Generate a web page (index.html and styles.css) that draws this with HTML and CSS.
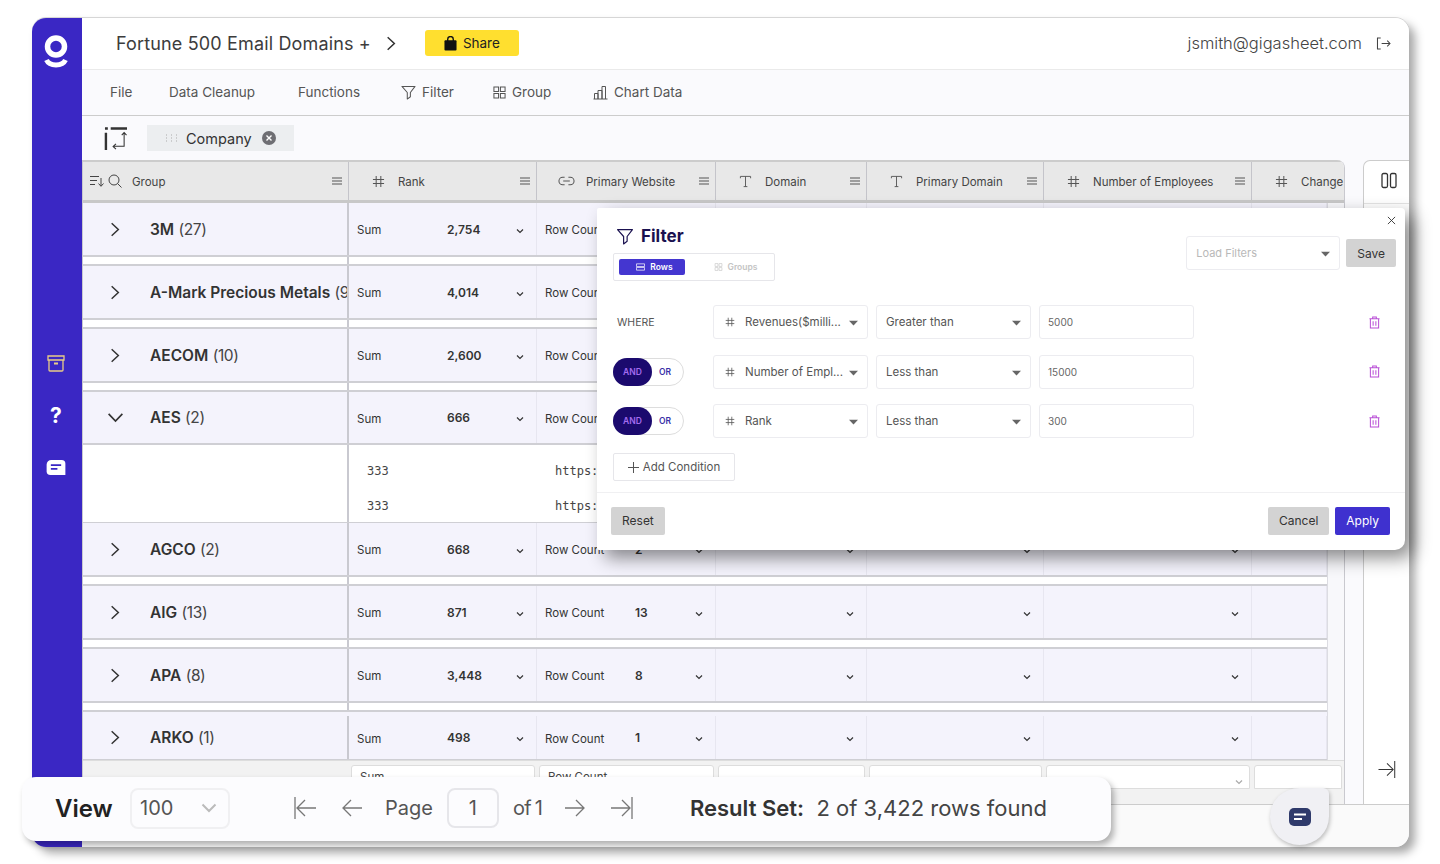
FILE: index.html
```html
<!DOCTYPE html>
<html lang="en">
<head>
<meta charset="utf-8">
<title>Gigasheet</title>
<link rel="stylesheet" href="styles.css">
</head>
<body>
<svg class="defs" width="0" height="0" aria-hidden="true">
  <symbol id="hash" viewBox="0 0 14 14"><path d="M4.5 1v12M9.5 1v12M1 4.8h12M1 9.2h12" fill="none" stroke="currentColor" stroke-width="1.1"/></symbol>
  <symbol id="menu" viewBox="0 0 10 8"><path d="M0 1h10M0 4h10M0 7h10" fill="none" stroke="currentColor" stroke-width="1.1"/></symbol>
  <symbol id="tee" viewBox="0 0 14 14"><path d="M1.5 3.5V1.5h11v2M7 1.5v11M5 12.5h4" fill="none" stroke="currentColor" stroke-width="1"/></symbol>
  <symbol id="link" viewBox="0 0 18 10"><path d="M7 1H5a4 4 0 0 0 0 8h2M11 1h2a4 4 0 0 1 0 8h-2M5.5 5h7" fill="none" stroke="currentColor" stroke-width="1.1"/></symbol>
  <symbol id="chev" viewBox="0 0 8 6"><path d="M1 1.5l3 3 3-3" fill="none" stroke="currentColor" stroke-width="1.2"/></symbol>
  <symbol id="right" viewBox="0 0 12 18"><path d="M2 1.5L10 9l-8 7.5" fill="none" stroke="currentColor" stroke-width="1.8"/></symbol>
  <symbol id="funnel" viewBox="0 0 16 16"><path d="M1 1.5h14L10 8v4.5L6.7 15V8z" fill="none" stroke="currentColor" stroke-width="1.1" stroke-linejoin="round"/></symbol>
  <symbol id="squares" viewBox="0 0 14 14"><path d="M1 1h5v5H1zM8 1h5v5H8zM1 8h5v5H1zM8 8h5v5H8z" fill="none" stroke="currentColor" stroke-width="1.1"/></symbol>
  <symbol id="caret" viewBox="0 0 10 6"><path d="M0 .5h10L5 5.8z" fill="currentColor"/></symbol>
  <symbol id="trash" viewBox="0 0 12 14"><path d="M1.5 3h9v10h-9zM.5 3h11M4 3V1h4v2M4.5 5.5v5M7.5 5.5v5" fill="none" stroke="currentColor" stroke-width="1.1"/></symbol>
  <symbol id="arrow-l" viewBox="0 0 20 18"><path d="M20 9H1M9 1L1 9l8 8" fill="none" stroke="currentColor" stroke-width="1.3"/></symbol>
  <symbol id="arrow-r" viewBox="0 0 20 18"><path d="M0 9h19M11 1l8 8-8 8" fill="none" stroke="currentColor" stroke-width="1.3"/></symbol>
  <symbol id="first" viewBox="0 0 22 22"><path d="M1 0v22M22 11H3M11 3l-8 8 8 8" fill="none" stroke="currentColor" stroke-width="1.3"/></symbol>
  <symbol id="last" viewBox="0 0 22 22"><path d="M21 0v22M0 11h19M11 3l8 8-8 8" fill="none" stroke="currentColor" stroke-width="1.3"/></symbol>
</svg>

<div class="frame">
  <aside class="sidebar">
    <svg class="logo" viewBox="0 0 24 34"><circle cx="12" cy="11.5" r="8.5" fill="none" stroke="#fff" stroke-width="5.5"/><path d="M2.5 25c3 6.500 16 6.500 19 0" fill="none" stroke="#fff" stroke-width="5"/></svg>
    <div class="side-icons">
      <svg class="side-archive" viewBox="0 0 18 17"><path d="M1 1h16v4H1zM2 5v10a1 1 0 0 0 1 1h12a1 1 0 0 0 1-1V5" fill="none" stroke="#e9cd86" stroke-width="1.300"/><rect x="7" y="7.500" width="4" height="2" fill="#e9cd86"/></svg>
      <span class="side-help">?</span>
      <svg class="side-chat" viewBox="0 0 20 16"><path d="M5 0h11a4 4 0 0 1 4 4v12H4a4 4 0 0 1-4-4V5a5 5 0 0 1 5-5z" fill="#fff"/><path d="M4.500 5.500h11M4.500 9.500h7" stroke="#3a27c4" stroke-width="2"/></svg>
    </div>
  </aside>

  <main class="main">
    <header class="topbar">
      <div class="top-left">
        <span class="doc-title">Fortune 500 Email Domains +</span>
        <svg class="doc-chev"><use href="#right"/></svg>
        <button class="share"><svg class="bag" viewBox="0 0 14 16"><path d="M4 6V3.500a3 3 0 0 1 6 0V6" fill="none" stroke="#111" stroke-width="1.500"/><rect x="0.500" y="4.500" width="13" height="11" rx="1" fill="#111"/></svg>Share</button>
      </div>
      <div class="top-right">
        <span class="email">jsmith@gigasheet.com</span>
        <svg class="logout" viewBox="0 0 16 14"><path d="M5 1H1.500v12H5M6 7h9M12 4l3 3-3 3" fill="none" stroke="#444" stroke-width="1.100"/></svg>
      </div>
    </header>

    <nav class="toolbar">
      <span class="tool t-file">File</span>
      <span class="tool t-clean">Data Cleanup</span>
      <span class="tool t-func">Functions</span>
      <span class="tool t-filter"><svg class="tool-icon"><use href="#funnel"/></svg>Filter</span>
      <span class="tool t-group"><svg class="tool-icon small"><use href="#squares"/></svg>Group</span>
      <span class="tool"><svg class="tool-icon" viewBox="0 0 15 14"><path d="M.5 13.500h14M1.500 13.500V8h3.500v5.500M5 13.500V5h4v8.500M9 13.500V1h3.500v12.500" fill="none" stroke="currentColor" stroke-width="1"/></svg>Chart Data</span>
    </nav>

    <div class="groupbar">
      <svg class="pivot" viewBox="0 0 24 24"><path d="M7 1.500h17M1 1.500h3" stroke="#333" stroke-width="2.500"/><path d="M2 6v18" stroke="#333" stroke-width="2.500"/><path d="M21 6v14H10M12.500 17.500l-3 2.800 3 2.700M18.500 8.500l2.500-2.700 2.500 2.700" fill="none" stroke="#333" stroke-width="1.100"/></svg>
      <div class="chip">
        <svg class="dots" viewBox="0 0 14 8"><path d="M1 1h1M6 1h1M11 1h1M1 4h1M6 4h1M11 4h1M1 7h1M6 7h1M11 7h1" stroke="#aaa" stroke-width="1.200"/></svg>
        <span class="chip-text">Company</span>
        <svg class="chip-x" viewBox="0 0 14 14"><circle cx="7" cy="7" r="7" fill="#6e6e73"/><path d="M4.500 4.500l5 5M9.500 4.500l-5 5" stroke="#fff" stroke-width="1.400"/></svg>
      </div>
    </div>

    <section class="workspace">
      <div class="grid">
        <div class="grid-head cols-head">
          <div class="hcell h-group">
            <svg class="sort" viewBox="0 0 14 12"><path d="M0 1.500h9M0 5.500h7M0 9.500h5M11 3v8M8.500 8.500l2.500 2.800 2.500-2.800" fill="none" stroke="#444" stroke-width="1"/></svg>
            <svg class="search" viewBox="0 0 14 14"><circle cx="6" cy="6" r="5" fill="none" stroke="#444" stroke-width="1"/><path d="M9.500 9.500L13.500 13.500" stroke="#444" stroke-width="1"/></svg>
            <span class="hlabel l-group">Group</span><svg class="hmenu"><use href="#menu"/></svg>
          </div>
          <div class="hcell h-icon-rank"><svg class="htype"><use href="#hash"/></svg><span class="hlabel">Rank</span><svg class="hmenu"><use href="#menu"/></svg></div>
          <div class="hcell h-icon-web"><svg class="htype wide"><use href="#link"/></svg><span class="hlabel">Primary Website</span><svg class="hmenu"><use href="#menu"/></svg></div>
          <div class="hcell h-icon-dom"><svg class="htype"><use href="#tee"/></svg><span class="hlabel">Domain</span><svg class="hmenu"><use href="#menu"/></svg></div>
          <div class="hcell h-icon-dom"><svg class="htype"><use href="#tee"/></svg><span class="hlabel">Primary Domain</span><svg class="hmenu"><use href="#menu"/></svg></div>
          <div class="hcell h-icon-dom"><svg class="htype"><use href="#hash"/></svg><span class="hlabel">Number of Employees</span><svg class="hmenu"><use href="#menu"/></svg></div>
          <div class="hcell h-icon-dom h-last"><svg class="htype"><use href="#hash"/></svg><span class="hlabel">Change</span></div>
        </div>

        <div class="grid-body">
          <div class="rows">
            <div class="row cols">
              <div class="cell c-name"><svg class="row-chev"><use href="#right"/></svg><b>3M</b>&nbsp;<span class="count">(27)</span></div>
              <div class="cell"><span class="agg">Sum</span><span class="val">2,754</span><svg class="dd"><use href="#chev"/></svg></div>
              <div class="cell"><span class="agg">Row Count</span><span class="val">27</span><svg class="dd"><use href="#chev"/></svg></div>
              <div class="cell"><svg class="dd"><use href="#chev"/></svg></div>
              <div class="cell"><svg class="dd"><use href="#chev"/></svg></div>
              <div class="cell"><svg class="dd"><use href="#chev"/></svg></div>
              <div class="cell"></div>
            </div>
            <div class="spacer"></div>
            <div class="row cols">
              <div class="cell c-name"><svg class="row-chev"><use href="#right"/></svg><b>A-Mark Precious Metals</b>&nbsp;<span class="count">(9)</span></div>
              <div class="cell"><span class="agg">Sum</span><span class="val">4,014</span><svg class="dd"><use href="#chev"/></svg></div>
              <div class="cell"><span class="agg">Row Count</span><span class="val">9</span><svg class="dd"><use href="#chev"/></svg></div>
              <div class="cell"><svg class="dd"><use href="#chev"/></svg></div>
              <div class="cell"><svg class="dd"><use href="#chev"/></svg></div>
              <div class="cell"><svg class="dd"><use href="#chev"/></svg></div>
              <div class="cell"></div>
            </div>
            <div class="spacer"></div>
            <div class="row cols">
              <div class="cell c-name"><svg class="row-chev"><use href="#right"/></svg><b>AECOM</b>&nbsp;<span class="count">(10)</span></div>
              <div class="cell"><span class="agg">Sum</span><span class="val">2,600</span><svg class="dd"><use href="#chev"/></svg></div>
              <div class="cell"><span class="agg">Row Count</span><span class="val">10</span><svg class="dd"><use href="#chev"/></svg></div>
              <div class="cell"><svg class="dd"><use href="#chev"/></svg></div>
              <div class="cell"><svg class="dd"><use href="#chev"/></svg></div>
              <div class="cell"><svg class="dd"><use href="#chev"/></svg></div>
              <div class="cell"></div>
            </div>
            <div class="spacer"></div>
            <div class="row row-open cols">
              <div class="cell c-name"><svg class="row-chev down" viewBox="0 0 18 12"><path d="M1.500 2L9 10l7.500-8" fill="none" stroke="currentColor" stroke-width="1.800"/></svg><b>AES</b>&nbsp;<span class="count">(2)</span></div>
              <div class="cell"><span class="agg">Sum</span><span class="val">666</span><svg class="dd"><use href="#chev"/></svg></div>
              <div class="cell"><span class="agg">Row Count</span><span class="val">2</span><svg class="dd"><use href="#chev"/></svg></div>
              <div class="cell"><svg class="dd"><use href="#chev"/></svg></div>
              <div class="cell"><svg class="dd"><use href="#chev"/></svg></div>
              <div class="cell"><svg class="dd"><use href="#chev"/></svg></div>
              <div class="cell"></div>
            </div>
            <div class="children">
              <div class="child cols">
                <div class="ccell"></div><div class="ccell mono">333</div><div class="ccell mono">https://www.aes.com</div><div class="ccell"></div><div class="ccell"></div><div class="ccell"></div><div class="ccell"></div>
              </div>
              <div class="child cols">
                <div class="ccell"></div><div class="ccell mono">333</div><div class="ccell mono">https://www.aes.com</div><div class="ccell"></div><div class="ccell"></div><div class="ccell"></div><div class="ccell"></div>
              </div>
            </div>
            <div class="row cols">
              <div class="cell c-name"><svg class="row-chev"><use href="#right"/></svg><b>AGCO</b>&nbsp;<span class="count">(2)</span></div>
              <div class="cell"><span class="agg">Sum</span><span class="val">668</span><svg class="dd"><use href="#chev"/></svg></div>
              <div class="cell"><span class="agg">Row Count</span><span class="val">2</span><svg class="dd"><use href="#chev"/></svg></div>
              <div class="cell"><svg class="dd"><use href="#chev"/></svg></div>
              <div class="cell"><svg class="dd"><use href="#chev"/></svg></div>
              <div class="cell"><svg class="dd"><use href="#chev"/></svg></div>
              <div class="cell"></div>
            </div>
            <div class="spacer"></div>
            <div class="row cols">
              <div class="cell c-name"><svg class="row-chev"><use href="#right"/></svg><b>AIG</b>&nbsp;<span class="count">(13)</span></div>
              <div class="cell"><span class="agg">Sum</span><span class="val">871</span><svg class="dd"><use href="#chev"/></svg></div>
              <div class="cell"><span class="agg">Row Count</span><span class="val">13</span><svg class="dd"><use href="#chev"/></svg></div>
              <div class="cell"><svg class="dd"><use href="#chev"/></svg></div>
              <div class="cell"><svg class="dd"><use href="#chev"/></svg></div>
              <div class="cell"><svg class="dd"><use href="#chev"/></svg></div>
              <div class="cell"></div>
            </div>
            <div class="spacer"></div>
            <div class="row cols">
              <div class="cell c-name"><svg class="row-chev"><use href="#right"/></svg><b>APA</b>&nbsp;<span class="count">(8)</span></div>
              <div class="cell"><span class="agg">Sum</span><span class="val">3,448</span><svg class="dd"><use href="#chev"/></svg></div>
              <div class="cell"><span class="agg">Row Count</span><span class="val">8</span><svg class="dd"><use href="#chev"/></svg></div>
              <div class="cell"><svg class="dd"><use href="#chev"/></svg></div>
              <div class="cell"><svg class="dd"><use href="#chev"/></svg></div>
              <div class="cell"><svg class="dd"><use href="#chev"/></svg></div>
              <div class="cell"></div>
            </div>
            <div class="spacer"></div>
            <div class="row row-last cols">
              <div class="cell c-name"><svg class="row-chev"><use href="#right"/></svg><b>ARKO</b>&nbsp;<span class="count">(1)</span></div>
              <div class="cell"><span class="agg">Sum</span><span class="val">498</span><svg class="dd"><use href="#chev"/></svg></div>
              <div class="cell"><span class="agg">Row Count</span><span class="val">1</span><svg class="dd"><use href="#chev"/></svg></div>
              <div class="cell"><svg class="dd"><use href="#chev"/></svg></div>
              <div class="cell"><svg class="dd"><use href="#chev"/></svg></div>
              <div class="cell"><svg class="dd"><use href="#chev"/></svg></div>
              <div class="cell"></div>
            </div>
          </div>
          <div class="scroll-track"></div>
        </div>

        <div class="grid-foot cols-head">
          <div class="fblank"></div>
          <div class="fcard">Sum</div>
          <div class="fcard">Row Count</div>
          <div class="fcard"></div>
          <div class="fcard"></div>
          <div class="fcard"><svg class="fdd"><use href="#chev"/></svg></div>
          <div class="fcard"></div>
        </div>
      </div>

      <aside class="sidepanel">
        <div class="side-top"><svg class="columns" viewBox="0 0 16 16"><rect x="1" y="1" width="5.500" height="14" rx="1.500" fill="none" stroke="#333" stroke-width="1.300"/><rect x="9.500" y="1" width="5.500" height="14" rx="1.500" fill="none" stroke="#333" stroke-width="1.300"/></svg></div>
        <svg class="collapse"><use href="#last"/></svg>
      </aside>
    </section>

    <footer class="footline"></footer>
  </main>

  <div class="modal">
    <svg class="modal-close" viewBox="0 0 10 10"><path d="M1 1l8 8M9 1l-8 8" stroke="#333" stroke-width="1"/></svg>
    <div class="modal-head">
      <div>
        <h2 class="modal-title"><svg class="title-icon"><use href="#funnel"/></svg>Filter</h2>
        <div class="tabs">
          <span class="tab active"><svg class="tab-icon" viewBox="0 0 10 8"><path d="M.5.500h9v3h-9zM.5 4.500h9v3h-9z" fill="none" stroke="currentColor" stroke-width=".8"/></svg>Rows</span>
          <span class="tab"><svg class="tab-icon"><use href="#squares"/></svg>Groups</span>
        </div>
      </div>
      <div class="head-right">
        <div class="select load">Load Filters<svg class="caret"><use href="#caret"/></svg></div>
        <button class="btn btn-grey btn-save">Save</button>
      </div>
    </div>

    <div class="conditions">
      <div class="cond">
        <div class="where">WHERE</div>
        <div class="select field"><svg class="fhash"><use href="#hash"/></svg><span class="ftext">Revenues($milli...</span><svg class="caret"><use href="#caret"/></svg></div>
        <div class="select op">Greater than<svg class="caret"><use href="#caret"/></svg></div>
        <div class="input">5000</div>
        <svg class="trash"><use href="#trash"/></svg>
      </div>
      <div class="cond">
        <div class="where"><div class="toggle"><span class="tg-and">AND</span><span class="tg-or">OR</span></div></div>
        <div class="select field"><svg class="fhash"><use href="#hash"/></svg><span class="ftext">Number of Empl...</span><svg class="caret"><use href="#caret"/></svg></div>
        <div class="select op">Less than<svg class="caret"><use href="#caret"/></svg></div>
        <div class="input">15000</div>
        <svg class="trash"><use href="#trash"/></svg>
      </div>
      <div class="cond">
        <div class="where"><div class="toggle"><span class="tg-and">AND</span><span class="tg-or">OR</span></div></div>
        <div class="select field"><svg class="fhash"><use href="#hash"/></svg><span class="ftext">Rank</span><svg class="caret"><use href="#caret"/></svg></div>
        <div class="select op">Less than<svg class="caret"><use href="#caret"/></svg></div>
        <div class="input">300</div>
        <svg class="trash"><use href="#trash"/></svg>
      </div>
    </div>

    <button class="add"><svg class="plus" viewBox="0 0 12 12"><path d="M6 0v12M0 6h12" stroke="#555" stroke-width="1.100"/></svg>Add Condition</button>

    <div class="modal-foot">
      <button class="btn btn-grey">Reset</button>
      <div class="foot-right">
        <button class="btn btn-grey btn-cancel">Cancel</button>
        <button class="btn btn-primary">Apply</button>
      </div>
    </div>
  </div>

  <div class="pager">
    <span class="view">View</span>
    <div class="view-select">100<svg class="view-chev" viewBox="0 0 16 10"><path d="M1.500 1.500L8 8l6.500-6.500" fill="none" stroke="#bbb" stroke-width="2"/></svg></div>
    <svg class="nav-edge first"><use href="#first"/></svg>
    <svg class="nav-arrow prev"><use href="#arrow-l"/></svg>
    <span class="page-label">Page</span>
    <div class="page-box">1</div>
    <span class="page-label page-of">of 1</span>
    <svg class="nav-arrow next"><use href="#arrow-r"/></svg>
    <svg class="nav-edge last"><use href="#last"/></svg>
    <span class="result"><b>Result Set:</b>&nbsp; 2 of 3,422 rows found</span>
  </div>

  <div class="chat">
    <svg class="chat-icon" viewBox="0 0 22 18"><rect width="22" height="18" rx="5" fill="#2f3a6b"/><path d="M5 6.500h12M5 11h8" stroke="#fff" stroke-width="2"/></svg>
  </div>
</div>
</body>
</html>
```
FILE: styles.css
```css
* { box-sizing: border-box; }
html, body { margin: 0; height: 100%; background: #fff; overflow: hidden; }
body { font-family: Inter, "Noto Sans", sans-serif; color: #333; }
button { font-family: inherit; }
svg { display: block; flex: none; }
.defs { position: absolute; }

.frame {
  position: relative;
  display: flex;
  width: 1377px;
  height: 829px;
  margin: 18px 0 0 32px;
  border-radius: 14px;
  background: #fafafd;
  box-shadow: 6px 6px 10px rgba(0,0,0,.35), 0 -1px 0 #ddd;
}

/* sidebar */
.sidebar {
  width: 50px;
  flex: none;
  display: flex;
  flex-direction: column;
  align-items: center;
  padding-right: 2px;
  background: #3a27c4;
  border-radius: 14px 0 0 14px;
}
.logo { width: 24px; height: 34px; margin-top: 17px; }
.side-icons { display: flex; flex-direction: column; align-items: center; margin-top: 286px; }
.side-archive { width: 18px; height: 17px; }
.side-help { color: #fff; font-weight: 700; font-size: 21px; line-height: 26px; margin-top: 31px; }
.side-chat { width: 20px; height: 15px; margin-top: 31px; }

/* main column */
.main { flex: 1; min-width: 0; display: flex; flex-direction: column; border-radius: 0 14px 14px 0; overflow: hidden; }
.topbar {
  height: 52px;
  flex: none;
  display: flex;
  align-items: center;
  justify-content: space-between;
  padding: 0 18px 1px 34px;
  background: #fff;
  border-bottom: 1px solid #eaeaea;
}
.top-left, .top-right { display: flex; align-items: center; }
.doc-title { font-size: 18px; color: #3c3c3c; letter-spacing: .15px; }
.doc-chev { width: 10px; height: 15px; margin-left: 15px; color: #333; }
.share {
  width: 94px; height: 26px;
  margin-left: 29px;
  display: flex; align-items: center; justify-content: center; gap: 6px;
  border: 0; border-radius: 3px;
  background: #ffdf2f;
  font-size: 13.500px; color: #222;
}
.bag { width: 13px; height: 15px; }
.email { font-size: 16.500px; color: #444; font-weight: 300; }
.logout { width: 15px; height: 13px; margin-left: 14px; }

.toolbar {
  height: 46px;
  flex: none;
  display: flex;
  align-items: center;
  padding: 0 0 1px 28px;
  border-bottom: 1px solid #ccc;
  font-size: 13.500px;
  color: #555;
}
.tool { display: flex; align-items: center; gap: 6px; }
.t-file { width: 59px; }
.t-clean { width: 129px; }
.t-func { width: 103px; }
.t-filter { width: 92px; }
.t-group { width: 100px; }
.tool-icon { width: 15px; height: 15px; }
.tool-icon.small { width: 13px; height: 13px; }

.groupbar { height: 44px; flex: none; display: flex; align-items: center; padding-left: 22px; }
.pivot { width: 23px; height: 23px; }
.chip {
  width: 147px; height: 26px;
  margin-left: 20px;
  display: flex; align-items: center;
  padding-left: 18px;
  background: #eceef0;
}
.dots { width: 14px; height: 8px; }
.chip-text { font-size: 14.500px; margin-left: 7px; width: 76px; color: #333; }
.chip-x { width: 14px; height: 14px; }

/* workspace */
.workspace { flex: 1; min-height: 0; display: flex; }
.grid {
  width: 1263px;
  flex: none;
  display: flex;
  flex-direction: column;
  border-left: 1px solid #c9c9cf;
  border-right: 1px solid #c9c9cf;
  border-radius: 0 8px 0 0;
  overflow: hidden;
}
.cols { display: grid; grid-template-columns: 266px 188px 179px 151px 177px 208px 75px; }
.cols-head { display: grid; grid-template-columns: 266px 188px 179px 151px 177px 208px 92px; }

.grid-head { height: 43px; flex: none; background: #e8e8e8; border-top: 2px solid #ccc; border-bottom: 3px solid #c8c8c8; }
.hcell { display: flex; align-items: center; border-right: 1px solid #c4c4ca; font-size: 11.500px; color: #444; padding-right: 6px; min-width: 0; overflow: hidden; }
.h-last { border-right: 0; padding-right: 0; }
.h-group { padding-left: 7px; }
.sort { width: 14px; height: 12px; }
.search { width: 14px; height: 14px; margin-left: 4px; }
.hlabel { flex: 1; white-space: nowrap; margin-top: 2px; }
.l-group { margin-left: 10px; }
.hmenu { width: 10px; height: 8px; color: #555; }
.htype { width: 13px; height: 13px; color: #555; margin-right: 13px; }
.htype.wide { width: 17px; height: 10px; margin-right: 11px; }
.h-icon-rank { padding-left: 23px; }
.h-icon-web { padding-left: 21px; }
.h-icon-dom { padding-left: 23px; }

.grid-body { flex: 1; min-height: 0; display: flex; background: #fff; }
.rows { width: 1244px; flex: none; display: flex; flex-direction: column; overflow: hidden; }
.scroll-track { flex: 1; background: #f8f8fb; border-left: 1px solid #dcdce2; }
.row { height: 54px; flex: none; background: #f4f3fc; border-bottom: 2px solid #cfcfd4; }
.row-open { height: 53px; }
.row-last { height: 49px; padding-top: 4px; }
.spacer { height: 9px; flex: none; background: #fff linear-gradient(#c9c9d0, #c9c9d0) 264px 0 / 2px 100% no-repeat; border-bottom: 2px solid #cfcfd4; }
.cell { display: flex; align-items: center; padding: 0 12px 0 8px; border-right: 1px solid #e7e6f0; font-size: 11.500px; color: #333; min-width: 0; }
.c-name { padding: 0 0 0 27px; border-right: 2px solid #c9c9d0; font-size: 15.500px; white-space: nowrap; overflow: hidden; }
.c-name b { font-weight: 600; color: #333; }
.count { color: #444; letter-spacing: -.4px; }
.row-chev { width: 10px; height: 17px; margin-right: 30px; color: #333; }
.row-chev.down { width: 17px; height: 11px; margin: 0 26px 0 -3px; }
.agg { width: 90px; flex: none; white-space: nowrap; margin-top: 2px; }
.val { flex: 1; font-weight: 600; font-size: 12px; }
.dd { width: 8px; height: 6px; margin: 3px 0 0 auto; color: #333; }

.children { height: 78px; flex: none; display: flex; flex-direction: column; padding-top: 9px; background: #fff linear-gradient(#c9c9d0, #c9c9d0) 264px 0 / 2px 100% no-repeat; border-bottom: 1px solid #cfcfd4; }
.child { height: 35px; flex: none; }
.ccell { min-width: 0; overflow: hidden; }
.mono { font-family: "DejaVu Sans Mono", monospace; font-size: 12px; color: #444; padding-left: 18px; white-space: nowrap; line-height: 35px; }

.grid-foot { height: 44px; flex: none; background: #f2f2f2; border-top: 1px solid #ddd; padding-top: 4px; }
.fblank { height: 24px; }
.fcard { height: 24px; margin: 0 2px; padding: 4px 0 0 8px; background: #fff; border: 1px solid #ddd; border-radius: 3px 3px 0 0; font-size: 11.500px; color: #444; display: flex; }
.fdd { width: 8px; height: 6px; margin: 9px 6px 0 auto; color: #aaa; }

.sidepanel { width: 46px; flex: none; margin-left: 18px; display: flex; flex-direction: column; align-items: center; background: #fff; border: 1px solid #ccc; border-width: 1px 0 0 1px; border-radius: 7px 0 0 0; }
.side-top { width: 100%; height: 43px; display: flex; align-items: center; justify-content: center; border-bottom: 1px solid #e4e4e4; padding: 0 0 4px 4px; }
.columns { width: 16px; height: 17px; }
.collapse { width: 18px; height: 17px; margin-top: 557px; color: #333; }

.footline { height: 43px; flex: none; border-top: 1px solid #ccc; background: #fafafa; }

/* modal */
.modal {
  position: absolute;
  left: 565px; top: 190px;
  width: 808px; height: 342px;
  display: flex;
  flex-direction: column;
  padding: 20px 0 0 16px;
  background: #fff;
  border-radius: 2px 4px 10px 2px;
  box-shadow: 8px 8px 18px rgba(0,0,0,.45);
  color: #555;
}
.modal-close { position: absolute; right: 9px; top: 8px; width: 9px; height: 9px; }
.modal-head { display: flex; justify-content: space-between; height: 78px; padding-right: 9px; }
.modal-title { display: flex; align-items: center; margin: 0; height: 16px; padding-left: 3px; font-size: 17px; font-weight: 700; color: #1a1150; }
.title-icon { width: 18px; height: 17px; margin-right: 7px; color: #1a1150; }
.tabs { width: 162px; height: 28px; margin-top: 9px; display: flex; align-items: center; padding: 0 5px; border: 1px solid #e6e6ea; border-radius: 2px; }
.tab { width: 66px; height: 16px; display: flex; align-items: center; justify-content: center; gap: 5px; padding-left: 5px; font-size: 8.500px; font-weight: 600; color: #c4c4c4; border-radius: 2px; }
.tab:last-child { margin-left: 15px; }
.tab.active { background: #4436d0; color: #fff; }
.tab-icon { width: 9px; height: 8px; }
.head-right { display: flex; align-items: center; gap: 6px; height: 34px; margin-top: 8px; }

.select { height: 34px; display: flex; align-items: center; padding-left: 9px; border: 1px solid #ececf0; border-radius: 3px; font-size: 11.500px; color: #555; position: relative; }
.caret { position: absolute; right: 9px; top: 14px; width: 9px; height: 6px; color: #666; }
.load { width: 154px; color: #b8b8b8; font-size: 11px; }
.btn { height: 28px; padding: 0 11px; border: 0; border-radius: 2px; font-size: 12px; color: #333; }
.btn-grey { background: #d3d3d3; }
.btn-primary { background: #3f31cf; color: #fff; }

.conditions { display: flex; flex-direction: column; gap: 15.500px; margin-top: -1px; }
.cond { display: flex; align-items: center; height: 34px; }
.where { width: 100px; padding-left: 4px; font-size: 10.500px; color: #555; }
.where .toggle { margin-left: -4px; }
.toggle { width: 71px; height: 28px; display: flex; align-items: center; border: 1px solid #ddd; border-radius: 14px; font-size: 8.500px; font-weight: 600; }
.tg-and { width: 39px; height: 28px; margin: 0 0 0 -1px; display: flex; align-items: center; justify-content: center; border-radius: 14px; background: #1b0a6e; color: #a56cf0; }
.tg-or { margin-left: 7px; color: #3a2fa8; }
.field { width: 155px; }
.fhash { width: 10px; height: 10px; margin: 0 10px 0 2px; color: #555; }
.ftext { white-space: nowrap; }
.op { width: 155px; margin-left: 8px; }
.input { width: 155px; height: 34px; margin-left: 8px; padding-left: 8px; display: flex; align-items: center; border: 1px solid #ececf0; border-radius: 3px; font-size: 10px; color: #666; }
.trash { width: 11px; height: 13px; margin-left: 175px; color: #b94fd6; }

.add { width: 122px; height: 28px; margin-top: 15px; display: flex; align-items: center; justify-content: center; gap: 4px; background: #fff; border: 1px solid #e6e6ea; border-radius: 2px; font-size: 11.500px; color: #555; padding: 0; }
.plus { width: 11px; height: 11px; }

.modal-foot { display: flex; justify-content: space-between; align-items: center; height: 58px; margin: 11px 0 0 -16px; padding: 0 15px 2px 14px; border-top: 1px solid #f0f0f2; }
.foot-right { display: flex; gap: 6px; }

/* pager */
.pager {
  position: absolute;
  left: -10px; top: 759px;
  width: 1089px; height: 64px;
  display: flex;
  align-items: center;
  padding: 0 0 2px 33px;
  background: #fcfcfe;
  border-radius: 14px;
  box-shadow: 3px 4px 6px rgba(0,0,0,.3);
  color: #555;
}
.view { width: 75px; font-size: 24px; font-weight: 600; color: #222; }
.view-select { width: 100px; height: 41px; display: flex; align-items: center; justify-content: space-between; padding: 0 11px 0 8px; border: 2px solid #f0f0f2; border-radius: 8px; font-size: 20px; color: #555; }
.view-chev { width: 16px; height: 10px; }
.nav-edge { width: 22px; height: 22px; color: #777; }
.nav-arrow { width: 20px; height: 18px; color: #777; }
.first { margin-left: 64px; }
.prev { margin-left: 26px; }
.page-label { font-size: 20px; color: #555; }
.prev + .page-label { margin-left: 23px; }
.page-of { width: 28px; white-space: nowrap; letter-spacing: -.6px; word-spacing: -1.500px; }
.page-box { width: 52px; height: 40px; margin: 0 14px; display: flex; align-items: center; justify-content: center; border: 2px solid #e6e6ea; border-radius: 8px; font-size: 20px; }
.next { margin-left: 24px; }
.last { margin-left: 26px; }
.result { margin-left: 57px; font-size: 22px; color: #444; white-space: nowrap; }
.result b { font-weight: 600; color: #333; }

.chat {
  position: absolute;
  left: 1238px; top: 770px;
  width: 59px; height: 57px;
  display: flex; align-items: center; justify-content: center;
  background: #f0f0f4;
  border-radius: 50% 10% 50% 50%;
  box-shadow: 1px 2px 4px rgba(0,0,0,.25);
}
.chat-icon { width: 22px; height: 18px; }
```
